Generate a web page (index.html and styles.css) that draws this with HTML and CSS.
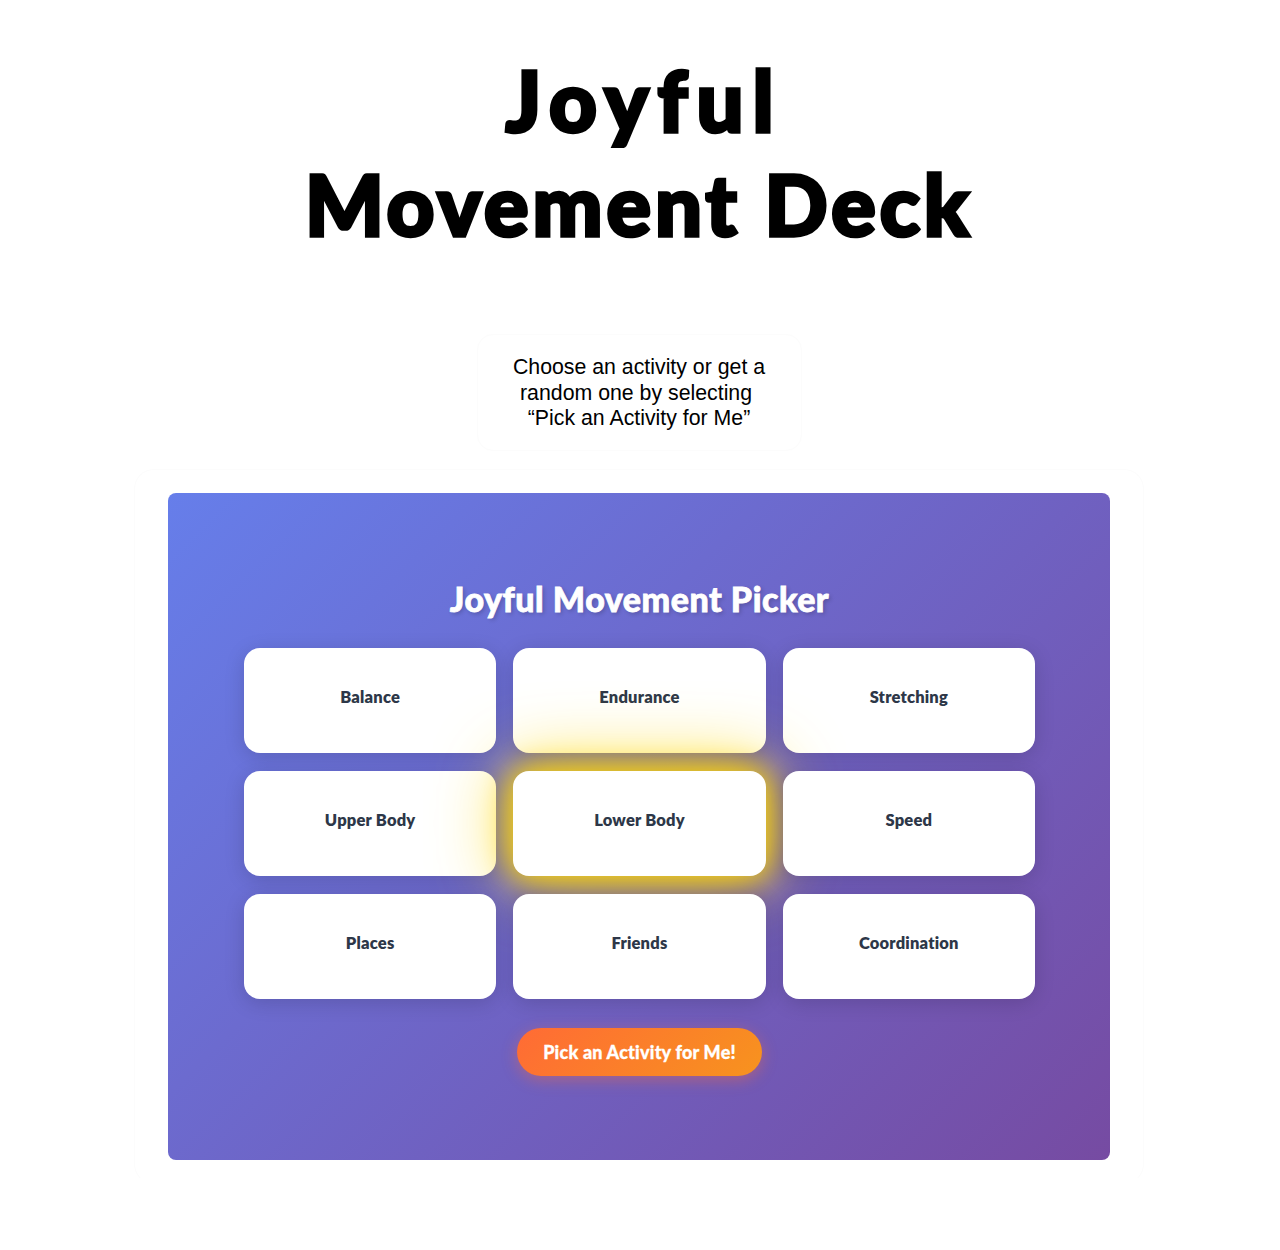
FILE: index.html
```html
<!DOCTYPE html>
<html lang="en">
<head>
<meta charset="utf-8">
<title>Joyful Movement Deck</title>
<link rel="stylesheet" href="styles.css">
</head>
<body>
<main class="page">
  <h1 class="title"><span class="title-short">Joyful</span><br><span class="title-long">Movement Deck</span></h1>
  <div class="intro">
    <p>Choose an activity or get a<br>random one by selecting&nbsp;<br>“Pick an Activity for Me”</p>
  </div>
  <section class="frame">
    <div class="picker">
      <h2 class="picker-title">Joyful Movement Picker</h2>
      <div class="grid">
        <button class="card">Balance</button>
        <button class="card">Endurance</button>
        <button class="card">Stretching</button>
        <button class="card">Upper Body</button>
        <button class="card card-active">Lower Body</button>
        <button class="card">Speed</button>
        <button class="card">Places</button>
        <button class="card">Friends</button>
        <button class="card">Coordination</button>
      </div>
      <button class="pick">Pick an Activity for Me!</button>
    </div>
  </section>
</main>
</body>
</html>
```
FILE: styles.css
```css
* { box-sizing: border-box; }
html, body { margin: 0; background: #fff; }
body { font-family: "Liberation Sans", Arial, sans-serif; color: #000; }
.page {
  width: 1278px;
  height: 1250px;
  padding-top: 48px;
  display: flex;
  flex-direction: column;
  align-items: center;
  overflow: hidden;
}
.title {
  margin: 0;
  font-family: Lato, sans-serif;
  font-weight: 900;
  font-size: 83px;
  line-height: 104px;
  text-align: center;
  -webkit-text-stroke: 3.5px #000;
}
.title-short { letter-spacing: 9px; padding-left: 10px; }
.title-long { letter-spacing: 4px; }
.intro {
  width: 325px;
  height: 117px;
  margin-top: 78px;
  border: 1px solid #fcfcfc;
  border-radius: 16px;
  padding-top: 20px;
  text-align: center;
}
.intro p { margin: 0; font-size: 21.3px; line-height: 25.5px; }
.frame {
  width: 1010px;
  margin-top: 18px;
  padding: 23px 33px;
  border: 1px solid #fcfcfc;
  border-bottom-color: transparent;
  border-radius: 20px;
}
.picker {
  height: 667px;
  padding: 86px 75px 0 76px;
  border-radius: 8px;
  background: linear-gradient(135deg, #667eea 0%, #764ba2 100%);
  display: flex;
  flex-direction: column;
  align-items: center;
}
.picker-title {
  margin: 0;
  font-family: Lato, sans-serif;
  font-weight: 900;
  font-size: 34px;
  line-height: 40px;
  letter-spacing: 0.5px;
  -webkit-text-stroke: 0.8px #fff;
  color: #fff;
  text-shadow: 2px 2px 4px rgba(0, 0, 0, 0.2);
}
.grid {
  width: 100%;
  margin-top: 29px;
  display: grid;
  grid-template-columns: repeat(3, 1fr);
  gap: 17.6px 17px;
}
.card {
  height: 105.4px;
  padding: 0 0 8px;
  border: 0;
  border-radius: 16px;
  background: #fff;
  box-shadow: 0 4px 20px rgba(0, 0, 0, 0.15);
  font-family: Lato, sans-serif;
  font-weight: 800;
  font-size: 16.5px;
  letter-spacing: 0.2px;
  color: #2d3748;
}
.card-active {
  box-shadow: 0 0 30px 2px #ffd700, 0 0 70px 6px rgba(255, 215, 0, 0.8);
}
.pick {
  width: 245px;
  height: 48px;
  margin-top: 28.6px;
  padding: 1px 0 0;
  border: 0;
  border-radius: 24px;
  background: linear-gradient(135deg, #ff6b35 0%, #f7931e 100%);
  box-shadow: 0 4px 15px rgba(255, 107, 53, 0.4);
  font-family: Lato, sans-serif;
  font-weight: 900;
  font-size: 18px;
  letter-spacing: 0.2px;
  -webkit-text-stroke: 0.3px #fff;
  color: #fff;
}
```
